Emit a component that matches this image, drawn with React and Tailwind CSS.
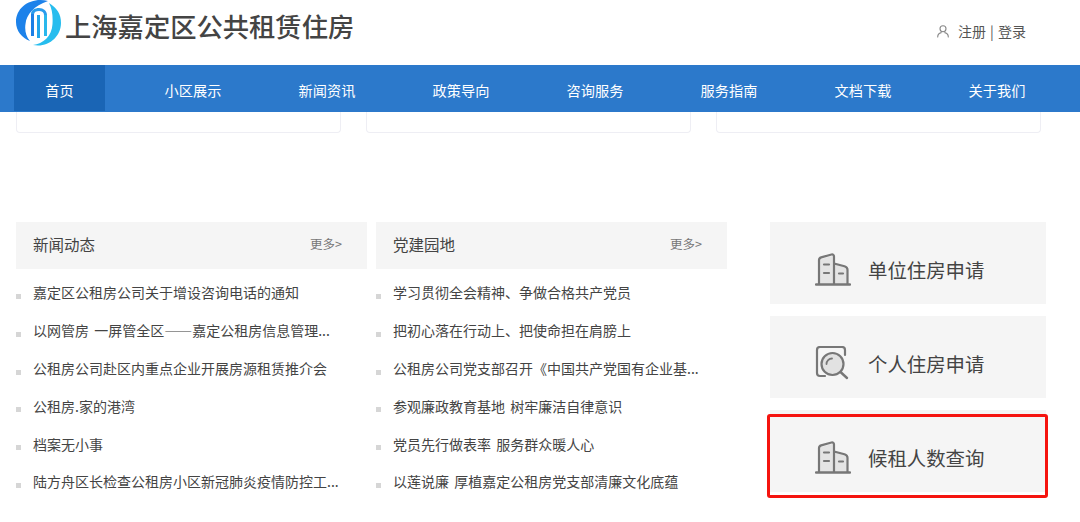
const FONT = "font-['Microsoft_YaHei','Noto_Sans_CJK_SC',sans-serif]";

const NAV = ['小区展示', '新闻资讯', '政策导向', '咨询服务', '服务指南', '文档下载', '关于我们'];
const NEWS = [
  '嘉定区公租房公司关于增设咨询电话的通知',
  '以网管房 一屏管全区——嘉定公租房信息管理...',
  '公租房公司赴区内重点企业开展房源租赁推介会',
  '公租房.家的港湾',
  '档案无小事',
  '陆方舟区长检查公租房小区新冠肺炎疫情防控工...',
];
const PARTY = [
  '学习贯彻全会精神、争做合格共产党员',
  '把初心落在行动上、把使命担在肩膀上',
  '公租房公司党支部召开《中国共产党国有企业基...',
  '参观廉政教育基地 树牢廉洁自律意识',
  '党员先行做表率 服务群众暖人心',
  '以莲说廉 厚植嘉定公租房党支部清廉文化底蕴',
];

function Logo() {
  return (
    <svg width="46" height="47" viewBox="0 0 46 47" className="shrink-0">
      <path d="M32 1C15 -3 0 7 0 22C0 31 6 38 14 41C10 37 8.500 30 9.500 24C10.500 14 18 6 32 1Z" fill="#1c82ea" />
      <path d="M33 3C41 8 45 14 45 23C45 37 32 48 17 45C27 44 36 36 36.500 24C37 15 36 9 33 3Z" fill="#27bdee" />
      <path d="M15 36V14C15 10 19 8 23 8C27.500 8 31 11 31 15V36H28V15C28 12.500 26 11 23 11C20 11 18 12 18 14.500V36Z" fill="#2a9cec" />
      <rect x="15" y="14" width="3" height="22" fill="#1c7fe6" />
      <rect x="21" y="15" width="3" height="23" fill="#22a5ea" />
      <rect x="28" y="15" width="3" height="21" fill="#2ab8ec" />
    </svg>
  );
}

function BuildingIcon() {
  return (
    <svg width="36" height="33" viewBox="0 0 36 33" fill="none" className="shrink-0">
      <path d="M4 31V6.500L19 2.500V31Z" fill="#e4e4e4" />
      <path d="M19 10.500L33 15V31H19Z" fill="#e4e4e4" />
      <path d="M4 31V7C4 5.500 5 4.800 6.200 4.400L16.500 1.500C18 1.200 19 2 19 3.500V31M19 10.500L29.500 13.200C31.500 13.800 32.500 15 32.500 16.800V31" stroke="#777" strokeWidth="2.200" strokeLinecap="round" />
      <path d="M1 31.500H35" stroke="#777" strokeWidth="2.400" strokeLinecap="round" />
      <path d="M9 11.500H14M9 20H14M24 20.500H28" stroke="#777" strokeWidth="2.200" strokeLinecap="round" />
    </svg>
  );
}

function SearchIcon() {
  return (
    <svg width="34" height="34" viewBox="0 0 34 34" fill="none" className="shrink-0">
      <path d="M10 30H5C3 30 2 29 2 27V4C2 2 3 1 5 1H27C29 1 30 2 30 4V9" stroke="#777" strokeWidth="2.200" strokeLinecap="round" />
      <circle cx="17.500" cy="18" r="11" fill="#e2e2e2" stroke="#777" strokeWidth="2.200" />
      <path d="M11.500 18C11.500 15 14 12.500 17 12.500" stroke="#777" strokeWidth="1.800" strokeLinecap="round" />
      <path d="M25.500 26L32 32" stroke="#777" strokeWidth="2.400" strokeLinecap="round" />
    </svg>
  );
}

function UserIcon() {
  return (
    <svg width="12" height="13" viewBox="0 0 12 13" fill="none" className="shrink-0">
      <circle cx="6" cy="3.800" r="3" stroke="#888" strokeWidth="1.100" />
      <path d="M0.700 12C0.700 9.500 2.500 8 4.200 7.600M11.300 12C11.300 9.500 9.500 8 7.800 7.600" stroke="#888" strokeWidth="1.100" strokeLinecap="round" />
    </svg>
  );
}

function Column({ title, items, className }) {
  return (
    <section className={`w-[351px] ${className}`}>
      <div className="flex h-[47px] items-center justify-between bg-[#f5f5f5] pb-[2px] pl-[17px] pr-[25px]">
        <h3 className="text-[15.500px] font-normal text-[#444]">{title}</h3>
        <a className="text-[12.500px] text-[#777]">更多&gt;</a>
      </div>
      <ul className="mt-[5px]">
        {items.map((t) => (
          <li key={t} className="relative flex h-[37.800px] items-center pl-[17px] text-[14px] text-[#444] whitespace-nowrap [word-spacing:2px]">
            <span className="absolute left-0 top-[20px] h-[5px] w-[5px] bg-[#d6d6d6]" />
            {t}
          </li>
        ))}
      </ul>
    </section>
  );
}

function Action({ icon, label, className = '' }) {
  return (
    <a className={`flex h-[82px] items-center bg-[#f5f5f5] pl-[45px] pt-[12px] ${className}`}>
      <span className="flex w-[53px] justify-start">{icon}</span>
      <span className="pt-[1px] text-[19.400px] text-[#444]">{label}</span>
    </a>
  );
}

export default function App() {
  return (
    <div lang="zh-CN" className={`relative h-[522px] w-[1080px] overflow-hidden bg-white ${FONT}`}>
      <header className="flex h-[65px] items-start justify-between pl-[16px] pr-[54px]">
        <div className="flex items-start gap-[3px]">
          <Logo />
          <span className="mt-[7px] text-[26.300px] font-medium leading-[38px] text-[#444] whitespace-nowrap">上海嘉定区公共租赁住房</span>
        </div>
        <div className="mt-[23px] flex items-center gap-[9px] text-[14px] leading-[16px] text-[#555]">
          <UserIcon />
          <span className="whitespace-pre [word-spacing:1px]">注册 | 登录</span>
        </div>
      </header>

      <nav className="flex h-[47px] items-stretch bg-[#2c79cb] pb-[1px] pl-[14px] text-[14.200px] text-white">
        <a className="flex w-[91px] items-center justify-center bg-[#1a65b5] pt-[5px]">首页</a>
        <div className="ml-[21px] flex">
          {NAV.map((n) => (
            <a key={n} className="flex w-[134px] items-center justify-center pt-[5px]">{n}</a>
          ))}
        </div>
      </nav>

      <div className="flex gap-[25px] pl-[16px]">
        {[0, 1, 2].map((i) => (
          <div key={i} className="h-[21px] w-[325px] rounded-b-[4px] border border-t-0 border-[#eeeef4] bg-white" />
        ))}
      </div>

      <main className="mt-[89px] flex pl-[16px]">
        <Column title="新闻动态" items={NEWS} />
        <Column title="党建园地" items={PARTY} className="ml-[9px]" />
        <aside className="ml-[43px] flex w-[276px] flex-col gap-[12px]">
          <Action icon={<BuildingIcon />} label="单位住房申请" />
          <Action icon={<SearchIcon />} label="个人住房申请" />
          <Action icon={<BuildingIcon />} label="候租人数查询" />
        </aside>
      </main>

      <div className="absolute left-[767px] top-[414px] h-[84px] w-[281px] rounded-[3px] border-[3px] border-[#f5140f]" />
    </div>
  );
}
